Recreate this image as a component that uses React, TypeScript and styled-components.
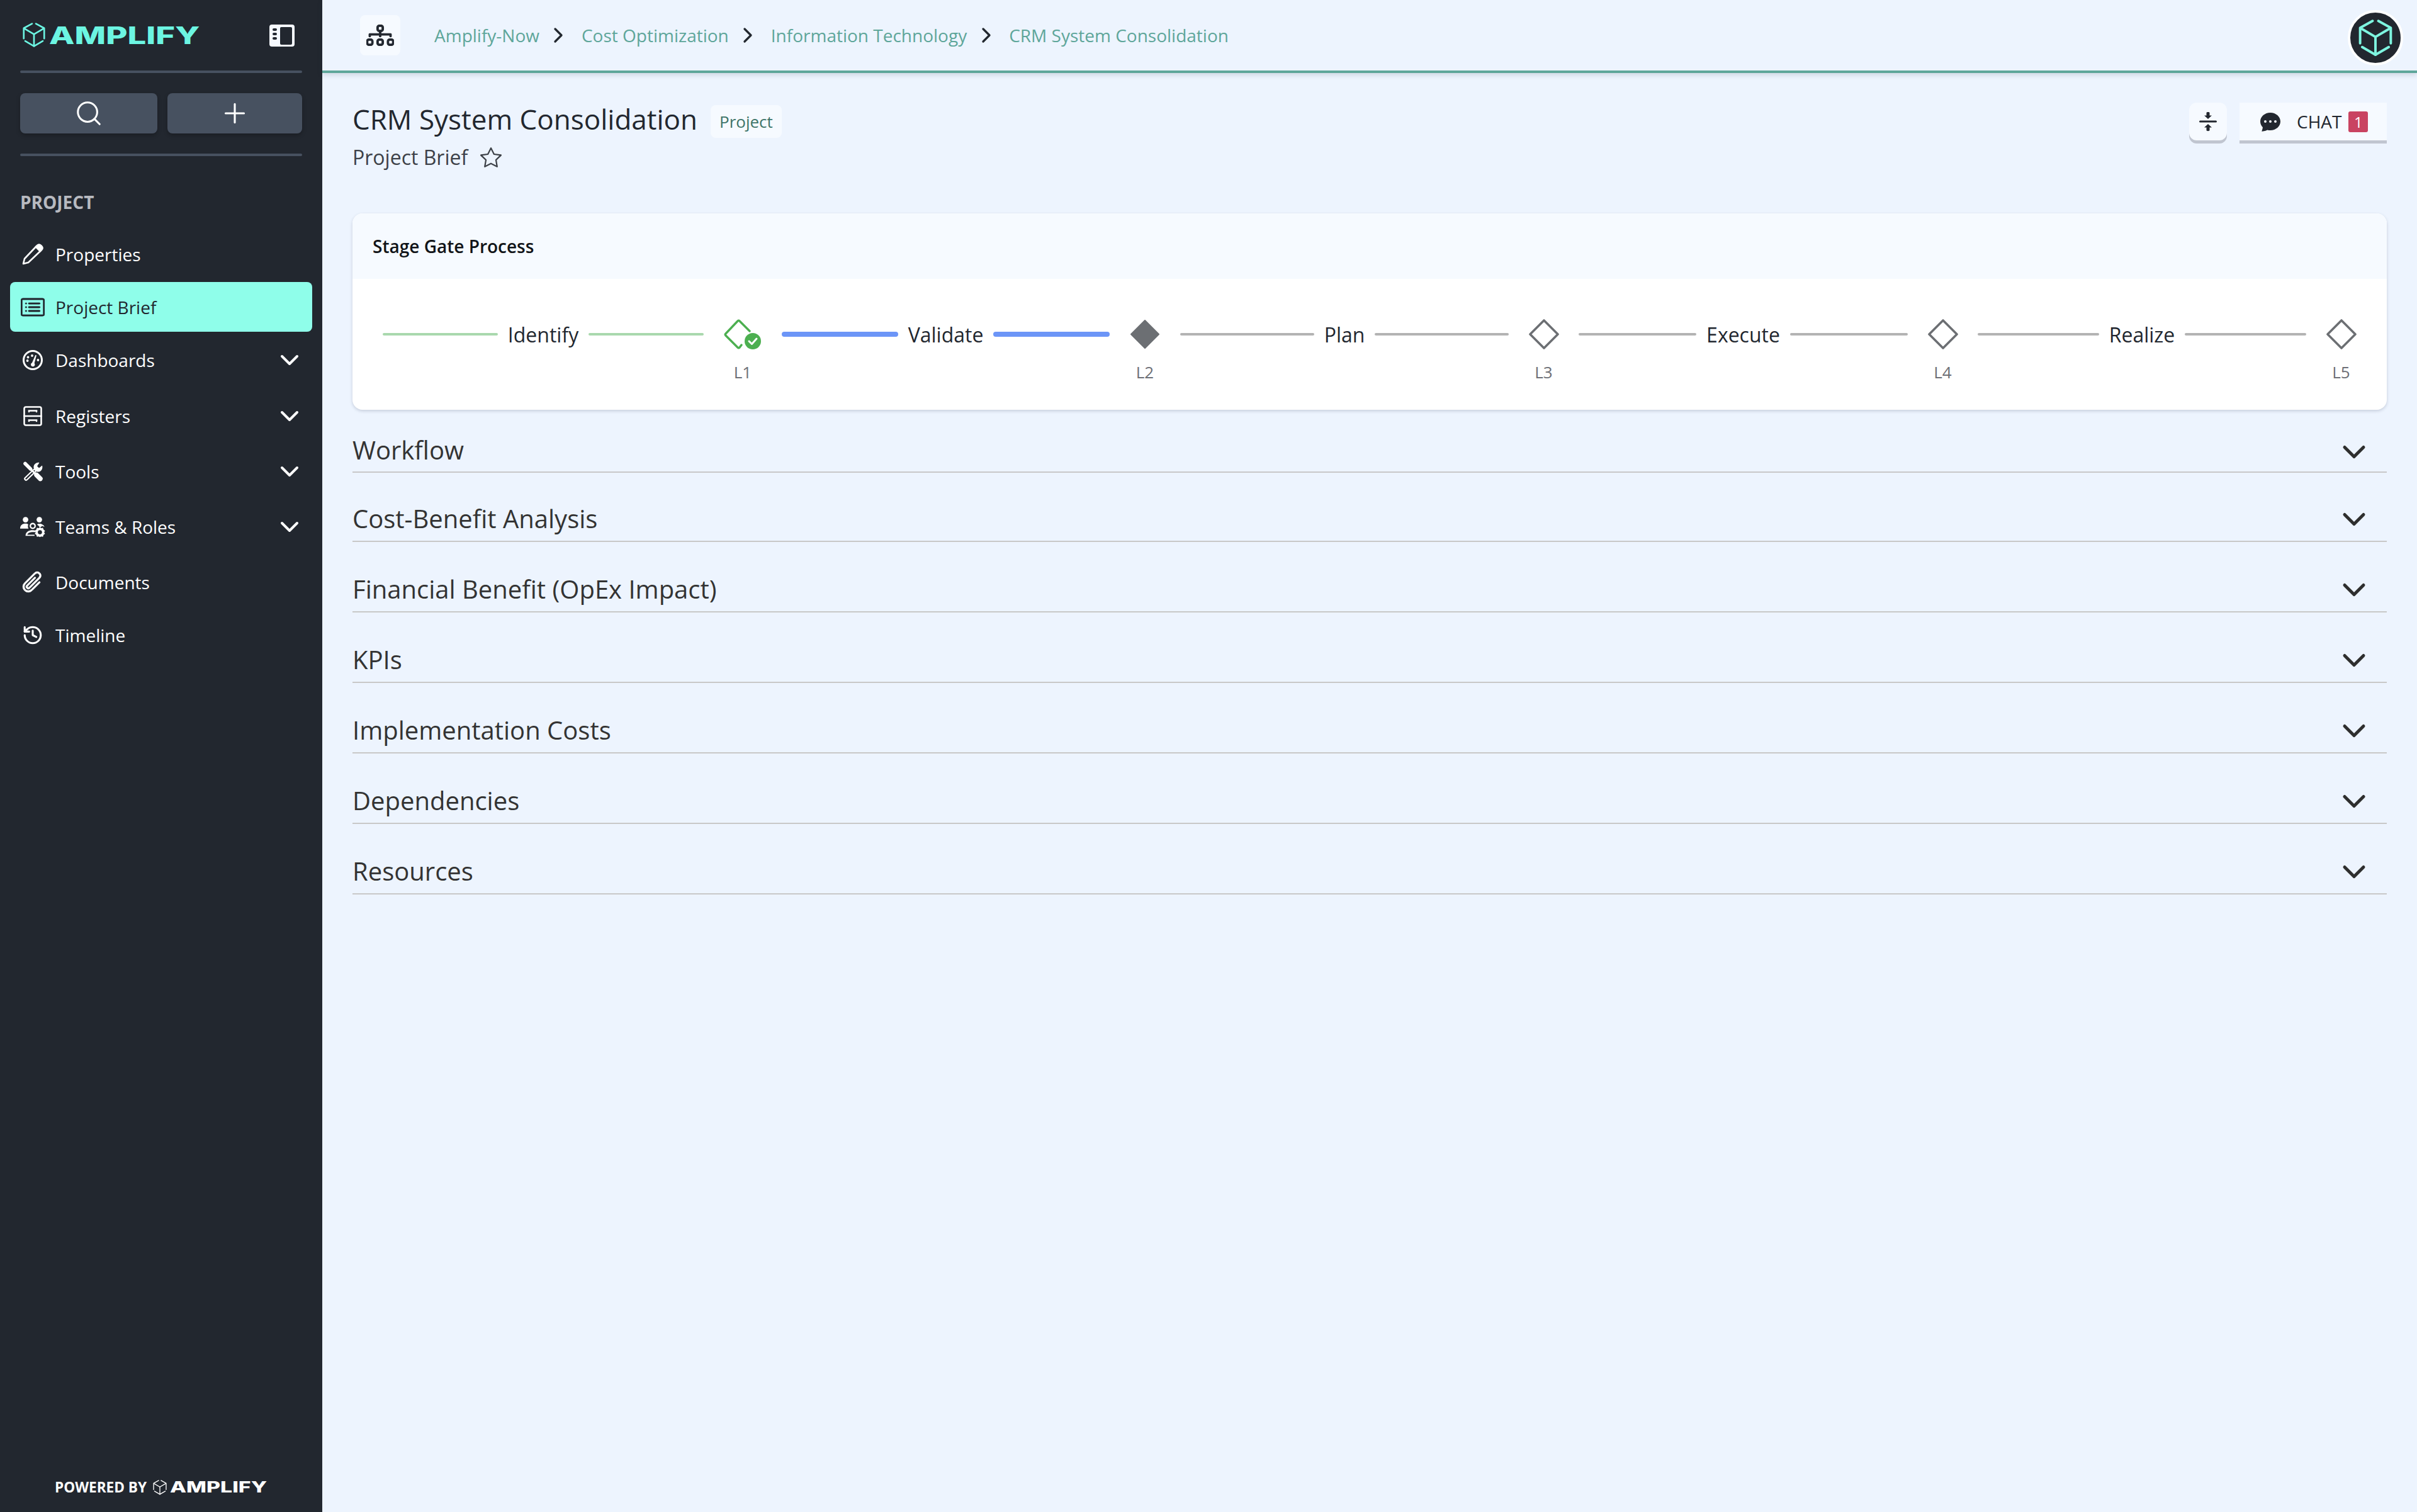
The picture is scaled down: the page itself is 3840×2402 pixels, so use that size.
import React from "react";
import styled, { createGlobalStyle } from "styled-components";
import { Search, Plus, ChevronDown, ChevronRight, History } from "lucide-react";
import {
  BsDiagram3,
  BsStar,
  BsChatDotsFill,
  BsPaperclip,
  BsCardList,
} from "react-icons/bs";

const GlobalStyle = createGlobalStyle`
  html, body {
    margin: 0;
    padding: 0;
    background: #edf4fe;
    font-family: "Open Sans", "Liberation Sans", sans-serif;
    color: #22272f;
  }
  * { box-sizing: border-box; }
`;

const Page = styled.div`
  display: flex;
  width: 3840px;
  height: 2402px;
  overflow: hidden;
  background: #edf4fe;
`;

const Sidebar = styled.aside`
  width: 512px;
  flex: none;
  display: flex;
  flex-direction: column;
  background: #22272f;
  color: #fff;
`;

const Brand = styled.div`
  height: 112px;
  display: flex;
  align-items: center;
  padding: 0 44px 0 36px;
  gap: 6px;
`;

const Wordmark = styled.span<{ $size: number; $width: number; $stretch: number; $color: string }>`
  display: inline-block;
  width: ${(p) => p.$width}px;
  font-family: Inter, "Liberation Sans", sans-serif;
  font-weight: 800;
  font-size: ${(p) => p.$size}px;
  line-height: 1;
  white-space: nowrap;
  color: ${(p) => p.$color};
  transform: scaleX(${(p) => p.$stretch});
  transform-origin: left center;
`;

const ToggleButton = styled.span`
  margin-left: auto;
  display: flex;
`;

const Rule = styled.div`
  height: 4px;
  margin: 0 32px;
  border-radius: 2px;
  background: #475160;
`;

const QuickActions = styled.div`
  display: flex;
  gap: 16px;
  padding: 32px;
`;

const QuickButton = styled.button`
  flex: 1;
  height: 64px;
  padding: 0;
  display: flex;
  align-items: center;
  justify-content: center;
  border: 0;
  border-radius: 8px;
  background: #475160;
  color: #fff;
  box-shadow: 0 3px 6px rgba(0, 0, 0, 0.25);

  &:first-child {
    flex: 0 0 218px;
  }
`;

const SectionLabel = styled.div`
  margin: 54px 0 0 32px;
  font-size: 28px;
  line-height: 38px;
  font-weight: 700;
  color: #b8bac0;
`;

const Nav = styled.nav`
  display: flex;
  flex-direction: column;
  margin-top: 20px;
`;

const NavItem = styled.div<{ $active?: boolean; $height: number }>`
  height: ${(p) => p.$height}px;
  margin: 0 16px;
  padding: 0 12px 0 16px;
  display: flex;
  align-items: center;
  border-radius: 8px;
  font-size: 28px;
  background: ${(p) => (p.$active ? "#8ffeea" : "transparent")};
  color: ${(p) => (p.$active ? "#22272f" : "#ffffff")};
`;

const NavIcon = styled.span`
  width: 40px;
  height: 40px;
  flex: none;
  margin-right: 16px;
  display: flex;
  align-items: center;
  justify-content: center;
`;

const NavChevron = styled.span`
  margin-left: auto;
  display: flex;
`;

const SidebarFoot = styled.div`
  margin-top: auto;
  height: 54px;
  display: flex;
  align-items: flex-start;
  padding-left: 87px;
  gap: 10px;
`;

const PoweredText = styled.span`
  font-size: 22.6px;
  line-height: 30px;
  font-weight: 700;
  color: #ffffff;
`;

const FootLogo = styled.span`
  display: flex;
  align-items: center;
  gap: 5px;
  height: 30px;
`;

const Main = styled.main`
  flex: 1;
  min-width: 0;
  display: flex;
  flex-direction: column;
`;

const TopBar = styled.header`
  height: 116px;
  flex: none;
  display: flex;
  align-items: center;
  padding: 0 22px 0 60px;
  border-bottom: 4px solid #5ea69a;
  box-shadow: 0 3px 8px rgba(40, 50, 70, 0.16);
`;

const HierarchyButton = styled.span`
  width: 64px;
  height: 64px;
  margin-right: 54px;
  display: flex;
  align-items: center;
  justify-content: center;
  border-radius: 8px;
  background: #f6faff;
  color: #22272f;
`;

const Crumb = styled.a`
  font-size: 28px;
  line-height: 38px;
  color: #5ea69a;
  white-space: nowrap;
`;

const CrumbSep = styled.span`
  width: 67px;
  padding-right: 6px;
  display: flex;
  justify-content: center;
  color: #22272f;
`;

const Avatar = styled.span`
  margin: 8px 0 0 auto;
  width: 88px;
  height: 88px;
  display: flex;
  align-items: center;
  justify-content: center;
  border-radius: 50%;
  border: 4px solid #ffffff;
  background: #22272f;
`;

const Content = styled.div`
  padding: 0 48px;
`;

const PageHead = styled.div`
  height: 223px;
  padding-top: 45px;
  display: flex;
  align-items: flex-start;
  justify-content: space-between;
`;

const TitleRow = styled.div`
  display: flex;
  align-items: flex-start;
  gap: 21px;
`;

const Title = styled.h1`
  margin: 0;
  font-size: 44px;
  line-height: 56px;
  font-weight: 400;
  color: #22272f;
`;

const TypeBadge = styled.span`
  height: 52px;
  margin-top: 6px;
  padding: 0 14px;
  display: flex;
  align-items: center;
  border-radius: 8px;
  background: #f6faff;
  font-size: 26px;
  color: #3e7569;
`;

const SubRow = styled.div`
  display: flex;
  align-items: center;
  gap: 20px;
  margin-top: 9px;
  font-size: 32px;
  line-height: 44px;
  color: #3d4148;
`;

const HeadActions = styled.div`
  display: flex;
  gap: 20px;
  margin-top: 2px;
`;

const IconAction = styled.button`
  width: 60px;
  height: 60px;
  padding: 0;
  display: flex;
  align-items: center;
  justify-content: center;
  border: 0;
  border-radius: 12px;
  background: #f6faff;
  box-shadow: 0 5px 0 #c0c5d0;
`;

const ChatButton = styled.button`
  width: 234px;
  height: 60px;
  padding: 0 0 0 33px;
  display: flex;
  align-items: center;
  border: 0;
  background: #f6faff;
  box-shadow: 0 5px 0 #c0c5d0;
  font-family: inherit;
  font-size: 28px;
  color: #22272f;
`;

const ChatLabel = styled.span`
  margin-left: 26px;
`;

const ChatCount = styled.span`
  width: 31px;
  height: 33px;
  margin-left: 11px;
  display: flex;
  align-items: center;
  justify-content: center;
  border-radius: 3px;
  background: #c94361;
  color: #fff;
  font-size: 24px;
`;

const StageCard = styled.section`
  border-radius: 16px;
  background: #ffffff;
  box-shadow: 0 2px 5px rgba(40, 50, 80, 0.2);
  overflow: hidden;
`;

const StageHead = styled.div`
  height: 104px;
  padding-left: 32px;
  display: flex;
  align-items: center;
  background: #f6faff;
  font-size: 28px;
  font-weight: 600;
  color: #111418;
`;

const StageTrack = styled.div`
  height: 208px;
  padding: 64px 17px 0 48px;
  display: flex;
  align-items: flex-start;
`;

const Stage = styled.div<{ $width: number }>`
  width: ${(p) => p.$width}px;
  flex: none;
  height: 48px;
  display: flex;
  align-items: center;
  gap: 16px;
  font-size: 32px;
  color: #22272f;
`;

const StageLine = styled.span<{ $tone: "done" | "current" | "todo" }>`
  flex: 1;
  height: ${(p) => (p.$tone === "current" ? 8 : 4)}px;
  border-radius: 4px;
  background: ${(p) =>
    p.$tone === "done" ? "#a9d8ad" : p.$tone === "current" ? "#6c95f7" : "#b3b3b3"};
`;

const Gate = styled.div<{ $width: number }>`
  width: ${(p) => p.$width}px;
  flex: none;
  display: flex;
  flex-direction: column;
  align-items: center;
`;

const GateName = styled.span`
  margin-top: 18px;
  font-size: 26px;
  line-height: 36px;
  color: #6d6f76;
`;

const Accordion = styled.div`
  margin-top: 36px;
  display: flex;
  flex-direction: column;
  gap: 48px;
`;

const AccordionRow = styled.div`
  height: 64px;
  padding: 0 22px 8px 0;
  display: flex;
  align-items: center;
  justify-content: space-between;
  border-bottom: 2px solid #c8c8c8;
  font-size: 40px;
  line-height: 56px;
  color: #333333;

  svg {
    margin-top: 2px;
  }

  &:first-child {
    margin-bottom: -2px;
    padding-bottom: 6px;

    svg {
      margin-top: 6px;
    }
  }
`;

const Cube = ({ size, color, width = 12 }: { size: number; color: string; width?: number }) => (
  <svg width={size} height={(size * 178) / 164} viewBox="0 0 164 178" fill="none" stroke={color} strokeWidth={width} strokeLinecap="round" strokeLinejoin="round">
    <path d="M68 7 L8 40 V115" />
    <path d="M96 7 L156 40 V115" />
    <path d="M14 44 L82 84 L150 44" />
    <path d="M82 84 V170" />
    <path d="M18 133 L82 170 L146 133" />
  </svg>
);

const SidebarToggle = () => (
  <svg width="40" height="35" viewBox="0 0 40 35">
    <rect width="40" height="35" rx="4" fill="#f6faff" />
    <rect x="17" y="4" width="19" height="28" rx="2" fill="#22272f" />
    <rect x="5" y="6" width="7" height="4" rx="2" fill="#22272f" />
    <rect x="5" y="13" width="7" height="4" rx="2" fill="#22272f" />
    <rect x="5" y="20" width="7" height="4" rx="2" fill="#22272f" />
  </svg>
);

const PencilIcon = () => (
  <svg width="34" height="34" viewBox="0 0 34 34" fill="none" stroke="currentColor" strokeWidth="2.6" strokeLinejoin="round">
    <path d="M2 32 L4 24 L22 5 L29 12 L10 30 Z" />
    <path d="M24 3 C26 1 28 1 30 3 L31 4 C33 6 33 8 31 10 L29 12 L22 5 Z" fill="currentColor" />
  </svg>
);

const GaugeIcon = () => (
  <svg width="32" height="32" viewBox="0 0 32 32" fill="currentColor">
    <circle cx="16" cy="16" r="14.5" fill="none" stroke="currentColor" strokeWidth="3" />
    <circle cx="15" cy="9" r="1.9" />
    <circle cx="8.5" cy="11.5" r="1.9" />
    <circle cx="7.6" cy="17" r="1.9" />
    <circle cx="24.4" cy="16" r="1.9" />
    <path d="M20.2 8 L22 8.6 L18.6 21 A3.2 3.2 0 1 1 15 20.2 Z" />
  </svg>
);

const CabinetIcon = () => (
  <svg width="30" height="32" viewBox="0 0 30 32" fill="none" stroke="currentColor" strokeWidth="2.6" strokeLinecap="round">
    <rect x="1.5" y="1.5" width="27" height="29" rx="2.5" />
    <path d="M1.5 16 H28.5" />
    <path d="M9 9 V7.5 H21 V9" />
    <path d="M9 24 V22.5 H21 V24" />
  </svg>
);

const ToolsIcon = () => (
  <svg width="33" height="32" viewBox="0 0 32 32" fill="none" stroke="currentColor" strokeLinecap="round">
    <path d="M18 15 L5 27.5" strokeWidth="6.5" />
    <path d="M18 15 L5 27.5" strokeWidth="2.4" stroke="#22272f" />
    <path d="M3.5 3.5 L12 12" strokeWidth="5.5" />
    <path d="M12 12 L20 20" strokeWidth="3" />
    <path d="M21.5 21.5 L27.5 27.5" strokeWidth="7.5" />
    <path
      d="M30.5 6.5 L25.5 10.5 L22.5 7.5 L26 2 C21 1 16.5 5 17 10 C17.5 14 21 17 25 16.5 C29 16 32 11.5 30.5 6.5 Z"
      fill="currentColor"
      stroke="none"
    />
  </svg>
);

const TeamsIcon = () => (
  <svg width="42" height="34" viewBox="0 0 42 34" fill="currentColor">
    <circle cx="9" cy="5" r="4.6" />
    <circle cx="32" cy="5" r="4.6" />
    <path d="M0 20 C0 14 4 11.5 9 11.5 C11 11.5 12.5 12 13.5 13 C12.5 16 13 18 14 20 Z" />
    <path d="M28 13 C30 11.5 33 11.5 35 12 C38 13 40 15 40.5 17 L37 15.5 L33 18 C31 15 29.5 14 28 13 Z" />
    <circle cx="21" cy="15.5" r="4" fill="none" stroke="currentColor" strokeWidth="2.4" />
    <path d="M9 32 C9 25 15 22.5 21 22.5 C23 22.5 24.5 22.8 26 23.2 L25.5 26 C21 25 13 25.5 12 30 H24 V32 Z" />
    <path d="M33 17.5 L35 19 L38 18.5 L39 21.5 L41.5 23.5 L40 26 L41.5 28.5 L39 30.5 L38 33.5 L35 33 L33 34 L31 33 L28 33.5 L27 30.5 L24.5 28.5 L26 26 L24.5 23.5 L27 21.5 L28 18.5 L31 19 Z M33 22.5 A3.5 3.5 0 1 0 33 29.5 A3.5 3.5 0 1 0 33 22.5 Z" fillRule="evenodd" />
  </svg>
);

const CollapseIcon = () => (
  <svg width="28" height="32" viewBox="0 0 28 32" fill="#22272f">
    <rect x="0" y="14.5" width="28" height="3" rx="1.5" />
    <path d="M14 12 L8 6.5 H11.5 V2 C11.5 0.5 16.5 0.5 16.5 2 V6.5 H20 Z" />
    <path d="M14 20 L8 25.5 H11.5 V30 C11.5 31.5 16.5 31.5 16.5 30 V25.5 H20 Z" />
  </svg>
);

const Diamond = ({ state }: { state: "done" | "current" | "todo" }) => {
  if (state === "done") {
    return (
      <svg width="60" height="48" viewBox="0 0 60 48" fill="none">
        <path d="M41 19 L25 3 C24 2 23 2 22 3 L3 23 C2 24 2 25 3 26 L22 45 C23 46 24 46 25 45 L28 41" stroke="#4caf50" strokeWidth="3.4" strokeLinecap="round" strokeLinejoin="round" />
        <circle cx="46" cy="35" r="13" fill="#4caf50" />
        <path d="M40 35 L44.5 39.5 L52 31" stroke="#fff" strokeWidth="3" strokeLinecap="round" strokeLinejoin="round" />
      </svg>
    );
  }
  return (
    <svg width="50" height="48" viewBox="0 0 50 48">
      <path
        d="M25 2 L47 24 L25 46 L3 24 Z"
        fill={state === "current" ? "#6c6f73" : "#ffffff"}
        stroke="#6c6f73"
        strokeWidth={state === "current" ? 2 : 3.6}
        strokeLinejoin="round"
      />
    </svg>
  );
};

const navItems: { label: string; icon: React.ReactNode; height: number; active?: boolean; caret?: boolean }[] = [
  { label: "Properties", icon: <PencilIcon />, height: 88 },
  { label: "Project Brief", icon: <BsCardList size={38} stroke="currentColor" strokeWidth={0.25} />, height: 79, active: true },
  { label: "Dashboards", icon: <GaugeIcon />, height: 90, caret: true },
  { label: "Registers", icon: <CabinetIcon />, height: 88, caret: true },
  { label: "Tools", icon: <ToolsIcon />, height: 88, caret: true },
  { label: "Teams & Roles", icon: <TeamsIcon />, height: 88, caret: true },
  { label: "Documents", icon: <BsPaperclip size={40} stroke="currentColor" strokeWidth={0.35} style={{ transform: "rotate(45deg)" }} />, height: 88 },
  { label: "Timeline", icon: <History size={34} strokeWidth={2.2} />, height: 79 },
];

const crumbs = ["Amplify-Now", "Cost Optimization", "Information Technology", "CRM System Consolidation"];

const stages: { label: string; width: number; tone: "done" | "current" | "todo"; gate: string; gateWidth: number }[] = [
  { label: "Identify", width: 510, tone: "done", gate: "L1", gateWidth: 124 },
  { label: "Validate", width: 521, tone: "current", gate: "L2", gateWidth: 112 },
  { label: "Plan", width: 522, tone: "todo", gate: "L3", gateWidth: 111 },
  { label: "Execute", width: 523, tone: "todo", gate: "L4", gateWidth: 111 },
  { label: "Realize", width: 522, tone: "todo", gate: "L5", gateWidth: 111 },
];

const sections = [
  "Workflow",
  "Cost-Benefit Analysis",
  "Financial Benefit (OpEx Impact)",
  "KPIs",
  "Implementation Costs",
  "Dependencies",
  "Resources",
];

export default function App() {
  return (
    <Page>
      <GlobalStyle />
      <Sidebar>
        <Brand>
          <Cube size={36} color="#6cf5e2" />
          <Wordmark $size={38} $width={236} $stretch={1.385} $color="#6cf5e2">AMPLIFY</Wordmark>
          <ToggleButton>
            <SidebarToggle />
          </ToggleButton>
        </Brand>
        <Rule />
        <QuickActions>
          <QuickButton><Search size={46} strokeWidth={1.6} /></QuickButton>
          <QuickButton><Plus size={50} strokeWidth={1.5} /></QuickButton>
        </QuickActions>
        <Rule />
        <SectionLabel>PROJECT</SectionLabel>
        <Nav>
          {navItems.map((item) => (
            <NavItem key={item.label} $active={item.active} $height={item.height}>
              <NavIcon>{item.icon}</NavIcon>
              {item.label}
              {item.caret && (
                <NavChevron>
                  <ChevronDown size={48} strokeWidth={2} />
                </NavChevron>
              )}
            </NavItem>
          ))}
        </Nav>
        <SidebarFoot>
          <PoweredText>POWERED BY</PoweredText>
          <FootLogo>
            <Cube size={22} color="#ffffff" width={10} />
            <Wordmark $size={24} $width={153} $stretch={1.41} $color="#ffffff">AMPLIFY</Wordmark>
          </FootLogo>
        </SidebarFoot>
      </Sidebar>
      <Main>
        <TopBar>
          <HierarchyButton>
            <BsDiagram3 size={44} stroke="currentColor" strokeWidth={0.4} />
          </HierarchyButton>
          {crumbs.map((crumb, i) => (
            <React.Fragment key={crumb}>
              {i > 0 && (
                <CrumbSep>
                  <ChevronRight size={40} strokeWidth={2} />
                </CrumbSep>
              )}
              <Crumb>{crumb}</Crumb>
            </React.Fragment>
          ))}
          <Avatar>
            <Cube size={54} color="#7ef5e0" width={12} />
          </Avatar>
        </TopBar>
        <Content>
          <PageHead>
            <div>
              <TitleRow>
                <Title>CRM System Consolidation</Title>
                <TypeBadge>Project</TypeBadge>
              </TitleRow>
              <SubRow>
                Project Brief
                <BsStar size={34} />
              </SubRow>
            </div>
            <HeadActions>
              <IconAction><CollapseIcon /></IconAction>
              <ChatButton>
                <BsChatDotsFill size={32} />
                <ChatLabel>CHAT</ChatLabel>
                <ChatCount>1</ChatCount>
              </ChatButton>
            </HeadActions>
          </PageHead>
          <StageCard>
            <StageHead>Stage Gate Process</StageHead>
            <StageTrack>
              {stages.map((stage, i) => (
                <React.Fragment key={stage.label}>
                  <Stage $width={stage.width}>
                    <StageLine $tone={stage.tone} />
                    {stage.label}
                    <StageLine $tone={stage.tone} />
                  </Stage>
                  <Gate $width={stage.gateWidth}>
                    <Diamond state={i === 0 ? "done" : i === 1 ? "current" : "todo"} />
                    <GateName>{stage.gate}</GateName>
                  </Gate>
                </React.Fragment>
              ))}
            </StageTrack>
          </StageCard>
          <Accordion>
            {sections.map((section) => (
              <AccordionRow key={section}>
                {section}
                <ChevronDown size={60} strokeWidth={2} color="#2e2e2e" />
              </AccordionRow>
            ))}
          </Accordion>
        </Content>
      </Main>
    </Page>
  );
}
